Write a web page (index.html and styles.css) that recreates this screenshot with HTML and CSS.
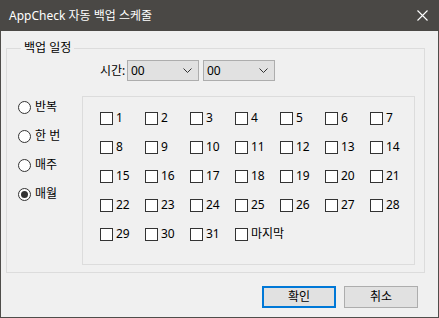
FILE: index.html
```html
<!DOCTYPE html>
<html lang="ko">
<head>
<meta charset="utf-8">
<title>AppCheck 자동 백업 스케줄</title>
<link rel="stylesheet" href="styles.css">
</head>
<body>
<div class="window">
  <div class="titlebar">
    <span class="title">AppCheck 자동 백업 스케줄</span>
    <svg class="close" width="11" height="11" viewBox="0 0 11 11"><path d="M0.5 0.5 L10.5 10.5 M10.5 0.5 L0.5 10.5" stroke="#ffffff" stroke-width="1.1" fill="none"/></svg>
  </div>
  <div class="content">
    <fieldset class="group">
      <legend class="group-label">백업 일정</legend>
      <div class="time-row">
        <span class="time-label">시간:</span>
        <div class="combo"><span>00</span><svg class="chev" width="9" height="5" viewBox="0 0 9 5"><path d="M0.5 0.5 L4.5 4.5 L8.5 0.5" stroke="#333" stroke-width="1" fill="none"/></svg></div>
        <div class="combo"><span>00</span><svg class="chev" width="9" height="5" viewBox="0 0 9 5"><path d="M0.5 0.5 L4.5 4.5 L8.5 0.5" stroke="#333" stroke-width="1" fill="none"/></svg></div>
      </div>
      <div class="lower">
        <div class="radios">
          <div class="radio"><span class="circle"></span><span>반복</span></div>
          <div class="radio"><span class="circle"></span><span>한 번</span></div>
          <div class="radio"><span class="circle"></span><span>매주</span></div>
          <div class="radio"><span class="circle checked"></span><span>매월</span></div>
        </div>
        <div class="days">
          <div class="check"><span class="box"></span><span>1</span></div>
          <div class="check"><span class="box"></span><span>2</span></div>
          <div class="check"><span class="box"></span><span>3</span></div>
          <div class="check"><span class="box"></span><span>4</span></div>
          <div class="check"><span class="box"></span><span>5</span></div>
          <div class="check"><span class="box"></span><span>6</span></div>
          <div class="check"><span class="box"></span><span>7</span></div>
          <div class="check"><span class="box"></span><span>8</span></div>
          <div class="check"><span class="box"></span><span>9</span></div>
          <div class="check"><span class="box"></span><span>10</span></div>
          <div class="check"><span class="box"></span><span>11</span></div>
          <div class="check"><span class="box"></span><span>12</span></div>
          <div class="check"><span class="box"></span><span>13</span></div>
          <div class="check"><span class="box"></span><span>14</span></div>
          <div class="check"><span class="box"></span><span>15</span></div>
          <div class="check"><span class="box"></span><span>16</span></div>
          <div class="check"><span class="box"></span><span>17</span></div>
          <div class="check"><span class="box"></span><span>18</span></div>
          <div class="check"><span class="box"></span><span>19</span></div>
          <div class="check"><span class="box"></span><span>20</span></div>
          <div class="check"><span class="box"></span><span>21</span></div>
          <div class="check"><span class="box"></span><span>22</span></div>
          <div class="check"><span class="box"></span><span>23</span></div>
          <div class="check"><span class="box"></span><span>24</span></div>
          <div class="check"><span class="box"></span><span>25</span></div>
          <div class="check"><span class="box"></span><span>26</span></div>
          <div class="check"><span class="box"></span><span>27</span></div>
          <div class="check"><span class="box"></span><span>28</span></div>
          <div class="check"><span class="box"></span><span>29</span></div>
          <div class="check"><span class="box"></span><span>30</span></div>
          <div class="check"><span class="box"></span><span>31</span></div>
          <div class="check wide"><span class="box"></span><span>마지막</span></div>
        </div>
      </div>
    </fieldset>
    <div class="buttons">
      <button class="btn default">확인</button>
      <button class="btn">취소</button>
    </div>
  </div>
</div>
</body>
</html>
```
FILE: styles.css
```css
* { box-sizing: border-box; }
html, body {
  margin: 0;
  padding: 0;
  background: #f0f0f0;
}
body {
  font-family: "Noto Sans", "Noto Sans CJK KR", sans-serif;
  font-size: 12px;
  color: #000;
}
.window {
  width: 439px;
  height: 318px;
  border: 1px solid #4f4d4a;
  border-top: 0;
  background: #f0f0f0;
  display: flex;
  flex-direction: column;
}
.titlebar {
  height: 31px;
  background: #4a4845;
  margin: 0 -1px;
  display: flex;
  align-items: center;
  justify-content: space-between;
  padding: 0 11px 0 9px;
}
.title {
  color: #ffffff;
  font-size: 12px;
  line-height: 16px;
}
.close { display: block; }
.content {
  flex: 1;
  display: flex;
  flex-direction: column;
}
.group {
  margin: 9px 13px 0 5px;
  padding: 4px 9px 7px 11px;
  border: 1px solid #dcdcdc;
  min-width: 0;
}
.group-label {
  padding: 0 3px;
  margin-left: 3px;
  line-height: 16px;
  height: 16px;
}
.time-row {
  display: flex;
  align-items: center;
  height: 21px;
  margin-left: 82px;
  gap: 4px;
}
.time-label {
  width: 25px;
  margin-right: -2px;
  line-height: 16px;
  white-space: nowrap;
}
.combo {
  width: 72px;
  height: 21px;
  background: #e1e1e1;
  border: 1px solid #adadad;
  display: flex;
  align-items: center;
  justify-content: space-between;
  padding: 0 6px 0 3px;
  line-height: 16px;
}
.chev { display: block; }
.lower {
  display: flex;
  margin-top: 15px;
}
.radios {
  width: 64px;
  display: flex;
  flex-direction: column;
  gap: 13px;
  padding-top: 3px;
}
.radio {
  display: flex;
  align-items: center;
  height: 16px;
  gap: 4px;
  line-height: 16px;
}
.circle {
  width: 13px;
  height: 13px;
  border: 1px solid #333;
  border-radius: 50%;
  background: #fff;
  display: flex;
  align-items: center;
  justify-content: center;
}
.circle.checked::after {
  content: "";
  width: 7px;
  height: 7px;
  border-radius: 50%;
  background: #333;
}
.days {
  width: 333px;
  height: 169px;
  border: 1px solid #dcdcdc;
  padding: 13px 0 0 17px;
  display: grid;
  grid-template-columns: repeat(7, 45px);
  grid-auto-rows: 16px;
  row-gap: 13px;
  align-content: start;
}
.check {
  display: flex;
  align-items: center;
  gap: 3px;
  line-height: 16px;
  white-space: nowrap;
}
.box {
  width: 13px;
  height: 13px;
  border: 1px solid #333;
  background: #fff;
  flex: none;
}
.buttons {
  display: flex;
  justify-content: flex-end;
  gap: 8px;
  margin: 13px 20px 0 0;
}
.btn {
  width: 74px;
  height: 22px;
  background: #e1e1e1;
  border: 1px solid #adadad;
  font-family: "Noto Sans", "Noto Sans CJK KR", sans-serif;
  font-size: 12px;
  line-height: 16px;
  color: #000;
  padding: 0;
}
.btn.default {
  border: 2px solid #0078d7;
}
```
